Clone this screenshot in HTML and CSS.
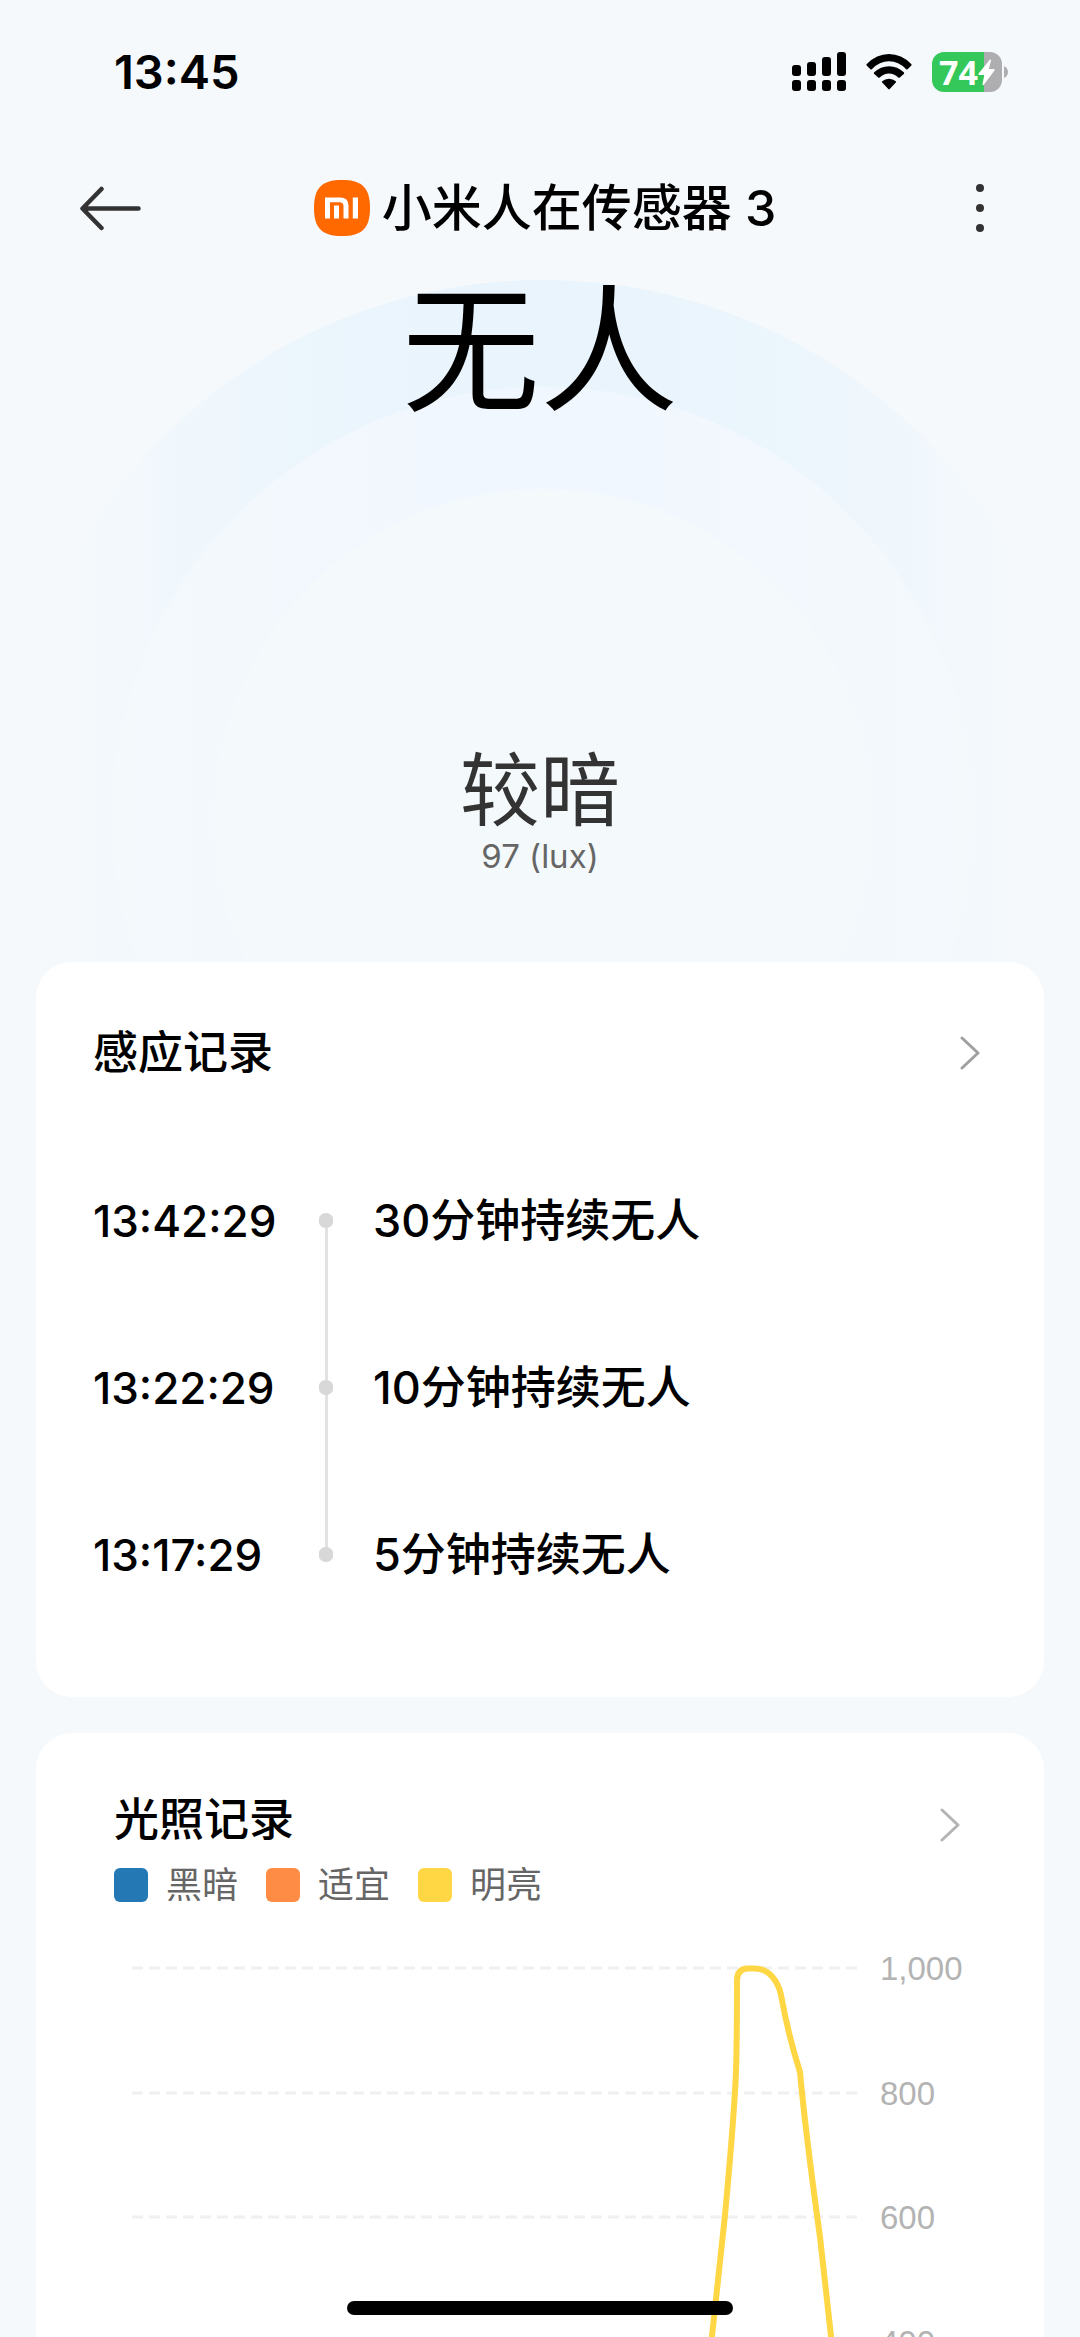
FILE: index.html
```html
<!DOCTYPE html>
<html lang="zh-CN">
<head>
<meta charset="utf-8">
<meta name="viewport" content="width=device-width, initial-scale=1">
<title>小米人在传感器 3</title>
<link rel="stylesheet" href="styles.css">
</head>
<body>
<div class="app">
  <svg class="rings" viewBox="0 0 1080 968" aria-hidden="true">
    <defs>
      <linearGradient id="outer" gradientUnits="userSpaceOnUse" x1="60" y1="0" x2="1026" y2="0">
        <stop offset="0" stop-color="#eaf5fd" stop-opacity="0"/>
        <stop offset="0.25" stop-color="#eaf5fd" stop-opacity="0.85"/>
        <stop offset="0.4" stop-color="#e9f4fc"/>
        <stop offset="0.6" stop-color="#e9f4fc"/>
        <stop offset="0.75" stop-color="#eaf5fd" stop-opacity="0.85"/>
        <stop offset="1" stop-color="#eaf5fd" stop-opacity="0"/>
      </linearGradient>
      <linearGradient id="middle" gradientUnits="userSpaceOnUse" x1="100" y1="0" x2="986" y2="0">
        <stop offset="0" stop-color="#f4f9fc"/>
        <stop offset="0.4" stop-color="#f1f7fe"/>
        <stop offset="0.6" stop-color="#f1f7fe"/>
        <stop offset="1" stop-color="#f4f9fc"/>
      </linearGradient>
    </defs>
    <circle cx="543" cy="818" r="538" fill="url(#outer)"/>
    <circle cx="543" cy="818" r="431" fill="url(#middle)"/>
    <circle cx="543" cy="818" r="329" fill="#f4f9fc"/>
  </svg>

  <div class="status">
    <time class="clock">13:45</time>
    <div class="indicators">
      <svg width="54" height="40" viewBox="0 0 54 40" role="img" aria-label="信号">
        <rect x="0" y="13" width="9" height="11" rx="3"/><rect x="15" y="10" width="9" height="14" rx="3"/><rect x="30" y="5" width="9" height="19" rx="3"/><rect x="45" y="0" width="9" height="24" rx="3"/>
        <rect x="0" y="28" width="9" height="11" rx="3"/><rect x="15" y="28" width="9" height="11" rx="3"/><rect x="30" y="28" width="9" height="11" rx="3"/><rect x="45" y="28" width="9" height="11" rx="3"/>
      </svg>
      <svg width="46" height="40" viewBox="0 0 46 40" role="img" aria-label="无线网络">
        <path d="M0.6 13.6Q0 12.8 0.8 12Q10.500 2 23 2T45.200 12Q46 12.800 45.400 13.600L41.600 17.200Q41 17.800 40.200 17.200Q32.500 9.300 23 9.300T5.800 17.200Q5 17.800 4.400 17.200Z"/>
        <path d="M8 21.700Q7.500 21 8.200 20.300Q14.500 14.300 23 14.300T37.800 20.300Q38.500 21 38 21.700L33.800 25.400Q33 26 32.300 25.400Q28 21.600 23 21.600T13.700 25.400Q13 26 12.200 25.400Z"/>
        <path d="M16.200 30.600Q15.500 29.900 16.200 29.200Q19 26.700 23 26.700T29.800 29.200Q30.500 29.900 29.800 30.600L23.700 36.900Q23 37.500 22.300 36.900Z"/>
      </svg>
      <div class="battery">
        <div class="battery-body">
          <span>74</span>
          <svg width="17" height="27" viewBox="0 0 17 27" aria-hidden="true"><path d="M12 0.500Q13.300 0 13 1.600L10.800 10H15.800Q17.300 10.200 16.300 11.700L5.800 25.800Q4.600 27 4.400 25.500L6.300 16H1.200Q-0.200 15.800 0.600 14.400Z" fill="#fff"/></svg>
        </div>
        <svg width="4" height="12" viewBox="0 0 4 12" aria-hidden="true"><path d="M0 0Q4 2 4 6T0 12Z" fill="#aeaeb0"/></svg>
      </div>
    </div>
  </div>

  <header class="header">
    <button class="icon-button" aria-label="返回">
      <svg width="61" height="45" viewBox="0 0 61 45" fill="none" stroke="#333" stroke-width="4.500" stroke-linecap="round" stroke-linejoin="round"><path d="M21.500 3L2.500 22.500L21.500 42M4 22.500H58.500"/></svg>
    </button>
    <div class="title">
      <svg width="56" height="56" viewBox="0 0 56 58" preserveAspectRatio="none" aria-hidden="true">
        <path d="M28 0C48 0 56 8 56 29S48 58 28 58S0 50 0 29S8 0 28 0Z" fill="#ff6900"/>
        <path d="M11 18H26Q34.500 18 34.500 26.500V40H29.500V27Q29.500 23 25.500 23H16V40H11ZM20 26.500H25V40H20ZM38.800 18H44V40H38.800Z" fill="#fff"/>
      </svg>
      <h1>小米人在传感器 3</h1>
    </div>
    <button class="icon-button icon-button-end" aria-label="更多">
      <svg width="60" height="48" viewBox="0 0 60 48" fill="#333"><circle cx="30" cy="4" r="4"/><circle cx="30" cy="24" r="4"/><circle cx="30" cy="44" r="4"/></svg>
    </button>
  </header>

  <main class="content">
    <section class="hero">
      <p class="presence">无人</p>
      <div>
        <p class="light">较暗</p>
        <p class="lux">97 (lux)</p>
      </div>
    </section>

    <section class="card card-log">
      <div class="card-head">
        <h2>感应记录</h2>
        <a href="#records" aria-label="查看感应记录"><svg width="20" height="34" viewBox="0 0 20 34" fill="none" stroke="#a0a0a0" stroke-width="3" stroke-linecap="round" stroke-linejoin="round"><path d="M2 2L18 17L2 32"/></svg></a>
      </div>
      <ol class="timeline" id="records">
        <li><time>13:42:29</time><i></i><span>30分钟持续无人</span></li>
        <li><time>13:22:29</time><i></i><span>10分钟持续无人</span></li>
        <li><time>13:17:29</time><i></i><span>5分钟持续无人</span></li>
      </ol>
    </section>

    <section class="card card-chart">
      <div class="card-head">
        <h2>光照记录</h2>
        <a href="#chart" aria-label="查看光照记录"><svg width="20" height="34" viewBox="0 0 20 34" fill="none" stroke="#b4b4b4" stroke-width="3" stroke-linecap="round" stroke-linejoin="round"><path d="M2 2L18 17L2 32"/></svg></a>
      </div>
      <ul class="legend">
        <li class="dark">黑暗</li>
        <li class="fit">适宜</li>
        <li class="bright">明亮</li>
      </ul>
      <svg class="chart" id="chart" viewBox="0 0 852 670" role="img" aria-label="光照曲线">
        <g class="grid">
          <path d="M18 29H744"/><path d="M18 154H744"/><path d="M18 278H744"/><path d="M18 403H744"/><path d="M18 528H744"/><path d="M18 652H744"/>
        </g>
        <g class="axis">
          <text x="766" y="41">1,000</text><text x="766" y="166">800</text><text x="766" y="290">600</text><text x="766" y="415">400</text><text x="766" y="540">200</text><text x="766" y="664">0</text>
        </g>
        <path class="curve" d="M580 640L598 397L602 360L611 276C615 232 620 180 622 133C623 100 623 70 623 42Q623 29.500 634 29.500H641C655 29.500 664 42 667 56C671 78 678 108 686 133C690 178 698 240 706 298L717 397L742 620"/>
      </svg>
    </section>
  </main>
  <div class="home-bar"></div>
</div>
</body>
</html>
```
FILE: styles.css
```css
* { box-sizing: border-box; }

body, h1, h2, p, ol, ul { margin: 0; padding: 0; }

body {
  background: #f5f9fc;
  color: #000;
  font-family: Inter, "Noto Sans CJK SC", sans-serif;
}

ol, ul { list-style: none; }

button {
  padding: 0;
  border: 0;
  background: none;
}

svg { display: block; }

.app {
  position: relative;
  display: flex;
  flex-direction: column;
  height: 100vh;
  overflow: hidden;
}

/* Soft rings behind the sensor state */
.rings {
  position: absolute;
  top: 0;
  left: 0;
  width: 100%;
}

.status, .header, .content { position: relative; }

.status {
  display: flex;
  flex: none;
  align-items: center;
  justify-content: space-between;
  height: 144px;
  padding: 0 72px 0 114px;
}

.clock {
  font-size: 47px;
  font-weight: 600;
  line-height: 56px;
}

.indicators {
  display: flex;
  align-items: center;
  gap: 20px;
}

.battery {
  display: flex;
  align-items: center;
  gap: 2px;
}

.battery-body {
  display: flex;
  align-items: center;
  justify-content: center;
  width: 70px;
  height: 40px;
  border-radius: 12px;
  background: linear-gradient(90deg, #34c759 74%, #aeaeb0 74%);
  color: #fff;
  font-family: "Noto Sans", sans-serif;
  font-size: 34px;
  font-weight: 700;
  line-height: 40px;
}

.header {
  z-index: 1;
  display: grid;
  flex: none;
  grid-template-columns: 1fr auto 1fr;
  align-items: center;
  height: 128px;
  padding: 0 70px 0 80px;
}

.icon-button { justify-self: start; }
.icon-button-end { justify-self: end; }

.title {
  display: flex;
  align-items: center;
  gap: 12px;
}

h1 {
  font-size: 50px;
  font-weight: 500;
  line-height: 60px;
}

.content {
  flex: 1;
  min-height: 0;
  margin-top: -32px;
  padding: 0 36px;
  overflow-y: auto;
  scrollbar-width: none;
}

.hero {
  display: flex;
  flex-direction: column;
  justify-content: space-between;
  height: 722px;
  padding-bottom: 84px;
  text-align: center;
}

.presence {
  font-size: 138px;
  line-height: 220px;
}

.light {
  color: #333;
  font-size: 80px;
  line-height: 88px;
}

.lux {
  color: #666;
  font-size: 33px;
  line-height: 44px;
}

.card {
  margin-bottom: 36px;
  border-radius: 36px;
  background: #fff;
}

.card-log { padding: 61px 64px 59px 57px; }

.card-head {
  display: flex;
  align-items: center;
  justify-content: space-between;
}

h2 {
  font-size: 45px;
  font-weight: 500;
  line-height: 60px;
}

.timeline {
  padding-top: 54px;
}

.timeline li {
  display: grid;
  grid-template-columns: 226px 14px 1fr;
  align-items: center;
  height: 167px;
  font-size: 44px;
  font-weight: 500;
  line-height: 60px;
}

.timeline i {
  align-self: stretch;
  background:
    radial-gradient(circle, #d8d8d8 7px, transparent 8px),
    linear-gradient(#e2e2e2, #e2e2e2) center / 3px 100% no-repeat;
}

.timeline li:first-child i {
  background:
    radial-gradient(circle, #d8d8d8 7px, transparent 8px),
    linear-gradient(#e2e2e2, #e2e2e2) bottom / 3px 50% no-repeat;
}

.timeline li:last-child i {
  background:
    radial-gradient(circle, #d8d8d8 7px, transparent 8px),
    linear-gradient(#e2e2e2, #e2e2e2) top / 3px 50% no-repeat;
}

.timeline span {
  padding-left: 40px;
  font-size: 45px;
}

.card-chart { padding: 57px 78px; }

.card-chart .card-head { padding-right: 6px; }

.card-chart .card-head a { padding-top: 10px; }

.legend {
  display: flex;
  gap: 28px;
  margin-top: 13px;
  color: #666;
  font-size: 36px;
  line-height: 44px;
}

.legend li {
  display: flex;
  align-items: center;
  gap: 18px;
}

.legend li::before {
  width: 34px;
  height: 34px;
  border-radius: 6px;
  content: "";
}

.legend .dark::before { background: #2478b3; }
.legend .fit::before { background: #ff8c45; }
.legend .bright::before { background: #ffd644; }

.chart {
  width: 100%;
  margin-top: 32px;
}

.grid {
  stroke: #f0f0f0;
  stroke-width: 3;
  stroke-dasharray: 11 6;
}

.axis {
  fill: #b3b3b3;
  font-family: "Liberation Sans", sans-serif;
  font-size: 33px;
}

.curve {
  fill: none;
  stroke: #ffd644;
  stroke-width: 6;
}

/* System gesture bar, floats over the page */
.home-bar {
  position: absolute;
  bottom: 22px;
  left: 50%;
  width: 386px;
  max-width: 50%;
  height: 14px;
  border-radius: 7px;
  background: #000;
  transform: translateX(-50%);
}
```
